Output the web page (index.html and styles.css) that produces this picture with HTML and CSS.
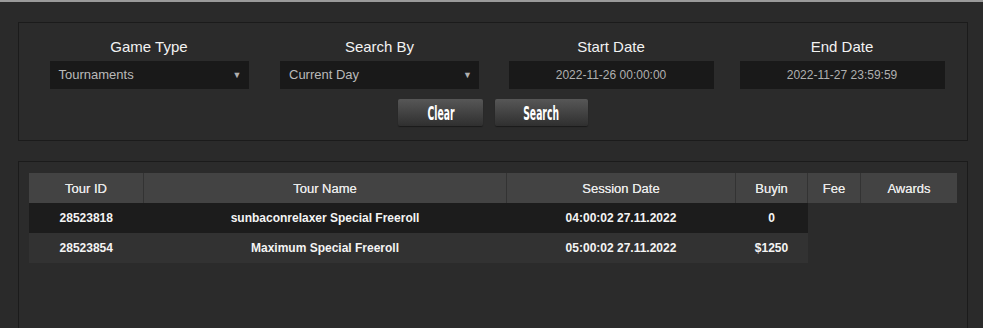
FILE: index.html
```html
<!DOCTYPE html>
<html lang="en">
<head>
    <meta charset="UTF-8">
    <meta name="viewport" content="width=device-width, initial-scale=1.0">
    <title>Tournament History</title>
    <link rel="stylesheet" href="styles.css">
</head>
<body>
    <div class="page">
        <div class="panel filters">
            <div class="filter-row">
                <div class="field">
                    <label>Game Type</label>
                    <div class="select">Tournaments <span class="arrow">&#9660;</span></div>
                </div>
                <div class="field">
                    <label>Search By</label>
                    <div class="select">Current Day <span class="arrow">&#9660;</span></div>
                </div>
                <div class="field">
                    <label>Start Date</label>
                    <div class="date">2022-11-26 00:00:00</div>
                </div>
                <div class="field">
                    <label>End Date</label>
                    <div class="date">2022-11-27 23:59:59</div>
                </div>
            </div>
            <div class="buttons">
                <button class="btn btn-clear"><span>Clear</span></button>
                <button class="btn btn-search"><span>Search</span></button>
            </div>
        </div>

        <div class="panel results">
            <table class="tours">
                <thead>
                    <tr>
                        <th class="c-id">Tour ID</th>
                        <th class="c-name">Tour Name</th>
                        <th class="c-date">Session Date</th>
                        <th class="c-buyin">Buyin</th>
                        <th class="c-fee">Fee</th>
                        <th class="c-awards">Awards</th>
                    </tr>
                </thead>
                <tbody>
                    <tr class="odd">
                        <td>28523818</td>
                        <td>sunbaconrelaxer Special Freeroll</td>
                        <td>04:00:02 27.11.2022</td>
                        <td>0</td>
                    </tr>
                    <tr class="even">
                        <td>28523854</td>
                        <td>Maximum Special Freeroll</td>
                        <td>05:00:02 27.11.2022</td>
                        <td>$1250</td>
                    </tr>
                </tbody>
            </table>
        </div>
    </div>
</body>
</html>
```

FILE: styles.css
```css
html, body {
    height: 100%;
}
body {
    margin: 0;
    background-color: #2a2a2a;
    border-top: 2px solid #9a9a9a;
    box-sizing: border-box;
    font-family: "Liberation Sans", Arial, sans-serif;
    color: #eee;
    overflow: hidden;
}
.page {
    padding: 20px 15px 0 18px;
}
.panel {
    border: 1px solid #1b1b1b;
    background: #2b2b2b;
}
.filters {
    padding: 15px 0 14px;
}
.filter-row {
    display: grid;
    grid-template-columns: 230px 231px 232px 230px;
    padding-left: 15px;
}
.field {
    display: flex;
    flex-direction: column;
    align-items: center;
}
.field label {
    font-size: 15px;
    line-height: 18px;
    color: #f2f2f2;
    margin-bottom: 5px;
}
.select {
    width: 199px;
    height: 28px;
    box-sizing: border-box;
    background: #191919;
    color: #bababa;
    font-size: 13px;
    line-height: 28px;
    padding: 0 7px 0 9px;
    display: flex;
    justify-content: space-between;
}
.select .arrow {
    font-size: 9px;
    color: #b0b0b0;
}
.date {
    width: 205px;
    height: 28px;
    background: #191919;
    color: #b0b0b0;
    font-size: 12px;
    line-height: 28px;
    text-align: center;
}
.buttons {
    display: flex;
    justify-content: center;
    gap: 12px;
    margin-top: 10px;
}
.btn {
    height: 27px;
    border: none;
    border-radius: 2px;
    background: linear-gradient(#575757, #2f2f2f);
    box-shadow: 0 1px 1px rgba(0,0,0,0.4);
    color: #fff;
    padding: 0;
    cursor: pointer;
}
.btn span {
    display: inline-block;
    font-family: "Liberation Sans Narrow", "DejaVu Sans Condensed", "Liberation Sans", sans-serif;
    font-weight: bold;
    font-size: 19px;
    transform: scaleX(0.54);
}
.btn-clear {
    width: 85px;
}
.btn-search {
    width: 93px;
}
.results {
    margin-top: 20px;
    padding: 11px 10px 0 10px;
    height: 167px;
    box-sizing: border-box;
    border-bottom: none;
}
.tours {
    border-collapse: collapse;
    width: 928px;
    table-layout: fixed;
}
.tours th {
    background: #434343;
    color: #e8e8e8;
    font-size: 13px;
    font-weight: normal;
    height: 30px;
    padding: 0;
    border-left: 1px solid #333;
    text-shadow: 0 0 0.6px #e8e8e8;
}
.tours th:first-child {
    border-left: none;
}
.c-id { width: 114px; }
.c-name { width: 362px; }
.c-date { width: 228px; }
.c-buyin { width: 71px; }
.c-fee { width: 52px; }
.c-awards { width: 96px; }
.tours td {
    height: 30px;
    padding: 0;
    text-align: center;
    font-size: 12px;
    font-weight: bold;
    color: #f4f4f4;
}
.odd td {
    background: #1c1c1c;
}
.even td {
    background: #323232;
}
```
